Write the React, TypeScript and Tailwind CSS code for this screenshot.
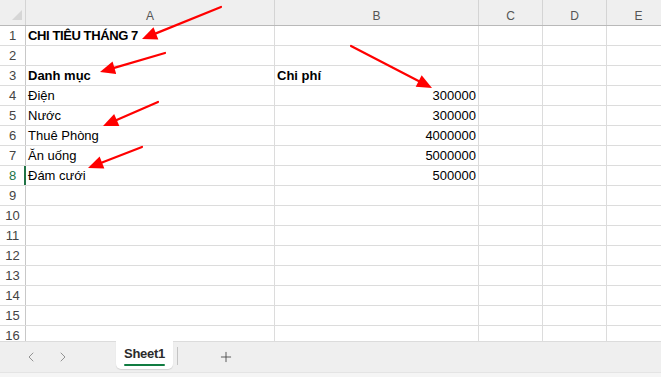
import React from 'react';
import { ChevronLeft, ChevronRight, Plus } from 'lucide-react';

type Arrow = { from: [number, number]; to: [number, number] };

const arrows: Arrow[] = [
  { from: [221, 7], to: [142, 39] },
  { from: [165, 53], to: [100, 72] },
  { from: [351, 46], to: [432, 88] },
  { from: [158, 102], to: [103, 126] },
  { from: [142, 147], to: [88, 168] },
];

const rows: { a?: string; b?: string; bold?: boolean; title?: boolean }[] = [
  { a: 'CHI TIÊU THÁNG 7', bold: true, title: true },
  {},
  { a: 'Danh mục', b: 'Chi phí', bold: true },
  { a: 'Điện', b: '300000' },
  { a: 'Nước', b: '300000' },
  { a: 'Thuê Phòng', b: '4000000' },
  { a: 'Ăn uống', b: '5000000' },
  { a: 'Đám cưới', b: '500000' },
  {}, {}, {}, {}, {}, {}, {}, {},
];

function RedArrow({ from, to }: Arrow) {
  const dx = to[0] - from[0];
  const dy = to[1] - from[1];
  const len = Math.hypot(dx, dy);
  const ux = dx / len;
  const uy = dy / len;
  const headLen = 15;
  const half = 6.5;
  const bx = to[0] - ux * headLen;
  const by = to[1] - uy * headLen;
  const pts = [
    `${to[0]},${to[1]}`,
    `${bx - uy * half},${by + ux * half}`,
    `${bx + uy * half},${by - ux * half}`,
  ].join(' ');
  return (
    <g>
      <line x1={from[0]} y1={from[1]} x2={bx + ux * 2} y2={by + uy * 2} stroke="#ff0000" strokeWidth={2.2} strokeLinecap="round" />
      <polygon points={pts} fill="#ff0000" />
    </g>
  );
}

const App: React.FC = () => {
  return (
    <div
      className="relative w-[661px] h-[377px] overflow-hidden bg-white flex flex-col text-[#000]"
      style={{ fontFamily: '"Liberation Sans", Arial, sans-serif' }}
    >
      {/* Grid */}
      <div className="flex-1 overflow-hidden">
        {/* Column headers */}
        <div className="flex h-[26px] bg-[#efefef] border-b border-[#b9b9b9] text-[12px] text-[#555]">
          <div className="w-[26px] shrink-0 border-r border-[#d4d4d4] relative">
            <svg width="26" height="25" className="absolute left-0 top-0">
              <polygon points="22,10 22,20 12,20" fill="#d6d6d6" />
            </svg>
          </div>
          <div className="w-[249px] shrink-0 border-r border-[#d4d4d4] flex items-end justify-center pb-[2px] leading-[14px]">A</div>
          <div className="w-[204px] shrink-0 border-r border-[#d4d4d4] flex items-end justify-center pb-[2px] leading-[14px]">B</div>
          <div className="w-[64px] shrink-0 border-r border-[#d4d4d4] flex items-end justify-center pb-[2px] leading-[14px]">C</div>
          <div className="w-[64px] shrink-0 border-r border-[#d4d4d4] flex items-end justify-center pb-[2px] leading-[14px]">D</div>
          <div className="w-[64px] shrink-0 border-r border-[#d4d4d4] flex items-end justify-center pb-[2px] leading-[14px]">E</div>
        </div>

        {rows.map((r, i) => {
          const selected = i === 7;
          return (
            <div key={i} className="flex h-[20px] border-b border-[#dcdcdc] text-[13px] leading-[19px]">
              <div
                className={
                  selected
                    ? 'w-[26px] shrink-0 border-r-2 border-[#217346] text-center text-[#217346] pl-[1px]'
                    : 'w-[26px] shrink-0 border-r border-[#c8c8c8] text-center text-[#444]'
                }
              >
                {i + 1}
              </div>
              <div
                className={
                  'w-[249px] shrink-0 border-r border-[#dcdcdc] pl-[2px] whitespace-nowrap ' +
                  (r.bold ? 'font-bold ' : '') +
                  (r.title ? 'tracking-[-0.4px]' : '')
                }
              >
                {r.a}
              </div>
              <div
                className={
                  'w-[204px] shrink-0 border-r border-[#dcdcdc] whitespace-nowrap ' +
                  (r.bold ? 'font-bold pl-[2px]' : 'text-right pr-[2px]')
                }
              >
                {r.b}
              </div>
              <div className="w-[64px] shrink-0 border-r border-[#dcdcdc]" />
              <div className="w-[64px] shrink-0 border-r border-[#dcdcdc]" />
              <div className="w-[64px] shrink-0 border-r border-[#dcdcdc]" />
            </div>
          );
        })}
      </div>

      {/* Sheet tab bar */}
      <div className="h-[31px] shrink-0 bg-[#efefef] border-t border-[#dcdcdc] flex items-start">
        <div className="w-[116px] h-full flex items-center pl-[23px] gap-[16px] text-[#8c8c8c]">
          <ChevronLeft size={16} strokeWidth={1.4} />
          <ChevronRight size={16} strokeWidth={1.4} />
        </div>
        <div className="-mt-px w-[57px] h-[28px] bg-white rounded-b-[5px] shadow-[0_1px_1px_rgba(0,0,0,0.12)] flex flex-col items-center pt-[5px]">
          <span className="text-[13px] leading-[16px] font-bold text-[#2b2b2b] tracking-[-0.3px]">Sheet1</span>
          <div className="mt-[2px] h-[2px] w-[41px] bg-[#107c41] rounded-full" />
        </div>
        <div className="ml-[4px] mt-[5px] w-px h-[18px] bg-[#c4c4c4]" />
        <div className="ml-[40px] mt-[7px] text-[#444]">
          <Plus size={16} strokeWidth={1.3} />
        </div>
      </div>
      <div className="h-[5px] shrink-0 bg-[#f5f5f5] border-t border-[#e4e4e4]" />

      {/* Red annotation arrows */}
      <svg className="absolute left-0 top-0 pointer-events-none" width="661" height="377">
        {arrows.map((a, i) => (
          <RedArrow key={i} {...a} />
        ))}
      </svg>
    </div>
  );
};

export default App;
